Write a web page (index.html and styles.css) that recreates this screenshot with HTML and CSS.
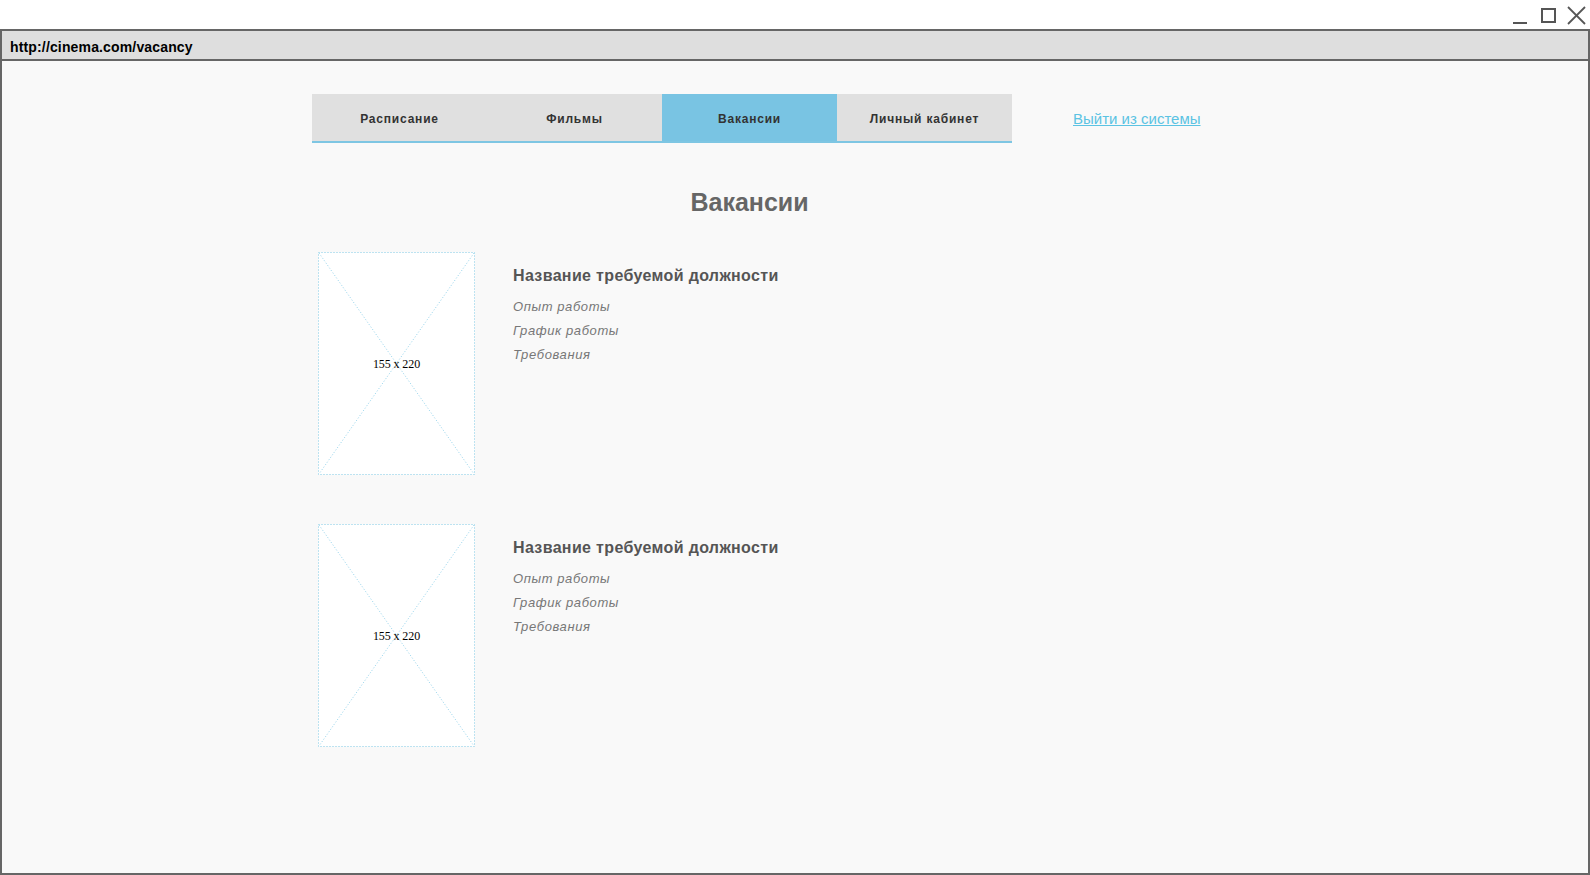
FILE: index.html
```html
<!DOCTYPE html>
<html lang="ru">
<head>
<meta charset="utf-8">
<title>Вакансии</title>
<link rel="stylesheet" href="styles.css">
</head>
<body>
<div class="titlebar">
  <svg class="controls" width="80" height="29" viewBox="0 0 80 29">
    <line x1="7" y1="23" x2="21" y2="23" stroke="#555" stroke-width="2"/>
    <rect x="36" y="9" width="13" height="13" fill="none" stroke="#555" stroke-width="2"/>
    <line x1="62" y1="7" x2="79" y2="24" stroke="#555" stroke-width="1.8"/>
    <line x1="79" y1="7" x2="62" y2="24" stroke="#555" stroke-width="1.8"/>
  </svg>
</div>
<div class="window">
  <div class="address">http://cinema.com/vacancy</div>
  <div class="content">
    <div class="container">
      <div class="topbar">
        <nav class="tabs">
          <a class="tab">Расписание</a>
          <a class="tab">Фильмы</a>
          <a class="tab active">Вакансии</a>
          <a class="tab">Личный кабинет</a>
        </nav>
        <a class="logout" href="#">Выйти из системы</a>
      </div>
      <h1 class="page-title">Вакансии</h1>
      <div class="vacancies">
        <div class="vacancy">
          <div class="placeholder">
            <svg class="ph-art" width="157" height="223" viewBox="0 0 157 223">
              <rect x="0.5" y="0.5" width="156" height="222" fill="#fff" stroke="#7fcbe7" stroke-dasharray="1 2"/>
              <line x1="1" y1="1" x2="156" y2="222" stroke="#93d3ec" stroke-dasharray="1 2"/>
              <line x1="156" y1="1" x2="1" y2="222" stroke="#93d3ec" stroke-dasharray="1 2"/>
            </svg>
            <span class="ph-label">155 x 220</span>
          </div>
          <div class="info">
            <h2 class="job-title">Название требуемой должности</h2>
            <ul class="job-props">
              <li>Опыт работы</li>
              <li>График работы</li>
              <li>Требования</li>
            </ul>
          </div>
        </div>
        <div class="vacancy">
          <div class="placeholder">
            <svg class="ph-art" width="157" height="223" viewBox="0 0 157 223">
              <rect x="0.5" y="0.5" width="156" height="222" fill="#fff" stroke="#7fcbe7" stroke-dasharray="1 2"/>
              <line x1="1" y1="1" x2="156" y2="222" stroke="#93d3ec" stroke-dasharray="1 2"/>
              <line x1="156" y1="1" x2="1" y2="222" stroke="#93d3ec" stroke-dasharray="1 2"/>
            </svg>
            <span class="ph-label">155 x 220</span>
          </div>
          <div class="info">
            <h2 class="job-title">Название требуемой должности</h2>
            <ul class="job-props">
              <li>Опыт работы</li>
              <li>График работы</li>
              <li>Требования</li>
            </ul>
          </div>
        </div>
      </div>
    </div>
  </div>
</div>
</body>
</html>
```
FILE: styles.css
```css
* { box-sizing: border-box; }
html, body {
  margin: 0;
  padding: 0;
  background: #fff;
  font-family: "Liberation Sans", Arial, sans-serif;
}
.titlebar {
  height: 29px;
  display: flex;
  justify-content: flex-end;
  padding-right: 4px;
}
.controls { display: block; }
.window {
  height: 846px;
  border: 2px solid #666;
  display: flex;
  flex-direction: column;
}
.address {
  height: 30px;
  background: #dedede;
  border-bottom: 2px solid #666;
  padding: 3px 0 0 8px;
  line-height: 26px;
  font-size: 14px;
  font-weight: bold;
  letter-spacing: 0.15px;
  color: #000;
}
.content {
  flex: 1;
  background: #f9f9f9;
  padding: 33px 0 0 310px;
}
.container {
  width: 875px;
}
.topbar {
  display: flex;
  align-items: center;
  white-space: nowrap;
}
.tabs {
  display: flex;
  flex-shrink: 0;
  border-bottom: 2px solid #7ec6e3;
}
.tab {
  width: 175px;
  height: 47px;
  display: flex;
  align-items: center;
  justify-content: center;
  background: #e0e0e0;
  font-size: 12px;
  font-weight: bold;
  letter-spacing: 0.8px;
  color: #333;
  padding-top: 3px;
}
.tab.active {
  background: #79c4e3;
}
.logout {
  flex-shrink: 0;
  margin-left: 61px;
  font-size: 15px;
  color: #5bc3e3;
  text-decoration: underline;
}
.page-title {
  margin: 45px 0 36px;
  text-align: center;
  font-size: 25px;
  line-height: 28px;
  font-weight: bold;
  color: #666;
}
.vacancies {
  display: flex;
  flex-direction: column;
  gap: 49px;
  padding-left: 6px;
}
.vacancy {
  display: flex;
  align-items: flex-start;
}
.placeholder {
  position: relative;
  width: 157px;
  height: 223px;
  display: flex;
  align-items: center;
  justify-content: center;
  flex-shrink: 0;
}
.ph-art {
  position: absolute;
  left: 0;
  top: 0;
}
.ph-label {
  position: relative;
  font-family: "Liberation Serif", "Times New Roman", serif;
  font-size: 12px;
  letter-spacing: -0.1px;
  color: #000;
  padding-top: 1px;
}
.info {
  margin-left: 38px;
  padding-top: 14px;
}
.job-title {
  margin: 0;
  font-size: 16px;
  line-height: 20px;
  font-weight: bold;
  letter-spacing: 0.35px;
  color: #555;
}
.job-props {
  list-style: none;
  margin: 9px 0 0;
  padding: 0;
}
.job-props li {
  font-size: 13px;
  line-height: 24px;
  font-style: italic;
  letter-spacing: 0.6px;
  color: #777;
}
```
